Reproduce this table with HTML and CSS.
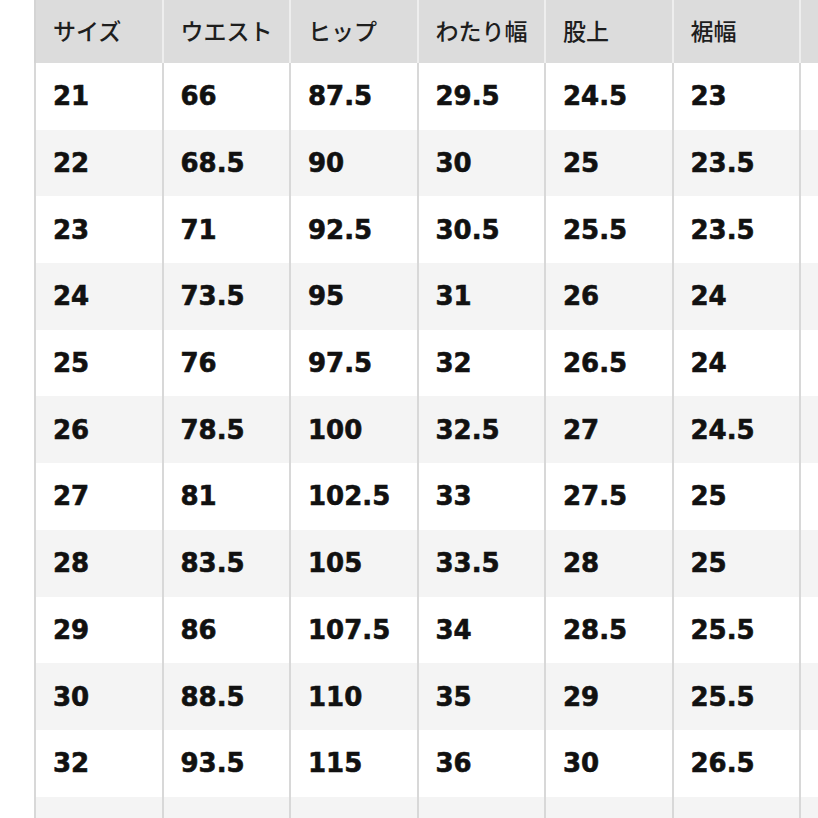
FILE: index.html
```html
<!DOCTYPE html>
<html lang="ja">
<head>
<meta charset="utf-8">
<title>サイズ表</title>
<link rel="stylesheet" href="styles.css">
</head>
<body>
<div class="page">
<table class="size-table">
<colgroup>
<col class="c"><col class="c"><col class="c"><col class="c"><col class="c"><col class="c"><col class="c">
</colgroup>
<thead>
<tr><th>サイズ</th><th>ウエスト</th><th>ヒップ</th><th>わたり幅</th><th>股上</th><th>裾幅</th><th></th></tr>
</thead>
<tbody>
<tr><td>21</td><td>66</td><td>87.5</td><td>29.5</td><td>24.5</td><td>23</td><td></td></tr>
<tr><td>22</td><td>68.5</td><td>90</td><td>30</td><td>25</td><td>23.5</td><td></td></tr>
<tr><td>23</td><td>71</td><td>92.5</td><td>30.5</td><td>25.5</td><td>23.5</td><td></td></tr>
<tr><td>24</td><td>73.5</td><td>95</td><td>31</td><td>26</td><td>24</td><td></td></tr>
<tr><td>25</td><td>76</td><td>97.5</td><td>32</td><td>26.5</td><td>24</td><td></td></tr>
<tr><td>26</td><td>78.5</td><td>100</td><td>32.5</td><td>27</td><td>24.5</td><td></td></tr>
<tr><td>27</td><td>81</td><td>102.5</td><td>33</td><td>27.5</td><td>25</td><td></td></tr>
<tr><td>28</td><td>83.5</td><td>105</td><td>33.5</td><td>28</td><td>25</td><td></td></tr>
<tr><td>29</td><td>86</td><td>107.5</td><td>34</td><td>28.5</td><td>25.5</td><td></td></tr>
<tr><td>30</td><td>88.5</td><td>110</td><td>35</td><td>29</td><td>25.5</td><td></td></tr>
<tr><td>32</td><td>93.5</td><td>115</td><td>36</td><td>30</td><td>26.5</td><td></td></tr>
<tr><td>34</td><td>98.5</td><td>120</td><td>37</td><td>31</td><td>27.5</td><td></td></tr>
</tbody>
</table>
</div>
</body>
</html>
```
FILE: styles.css
```css
html, body {
  margin: 0;
  padding: 0;
  background: #ffffff;
  overflow: hidden;
  height: 818px;
}
.page {
  padding-left: 34px;
  margin-top: -4px;
}
.size-table {
  border-collapse: collapse;
  table-layout: fixed;
  width: 892px;
}
.size-table .c {
  width: 127.5px;
}
.size-table th {
  height: 67px;
  background: #dcdcdc;
  color: #1e1e1e;
  font-family: "Noto Sans CJK JP", "Noto Sans", sans-serif;
  font-weight: 500;
  font-size: 23px;
  text-align: left;
  padding: 0 0 0 17px;
  border-left: 2px solid #eeeeee;
  vertical-align: middle;
}
.size-table th:first-child {
  border-left-color: #d4d4d4;
}
.size-table td {
  height: 66.7px;
  padding: 0 0 0 17px;
  font-family: "DejaVu Sans", "Liberation Sans", sans-serif;
  font-weight: 700;
  font-size: 26px;
  color: #111111;
  -webkit-text-stroke: 0.6px #111111;
  border-left: 2px solid #d8d8d8;
  vertical-align: middle;
  white-space: nowrap;
}
.size-table tbody tr:nth-child(odd) td {
  background: #ffffff;
}
.size-table tbody tr:nth-child(even) td {
  background: #f4f4f4;
}
```
